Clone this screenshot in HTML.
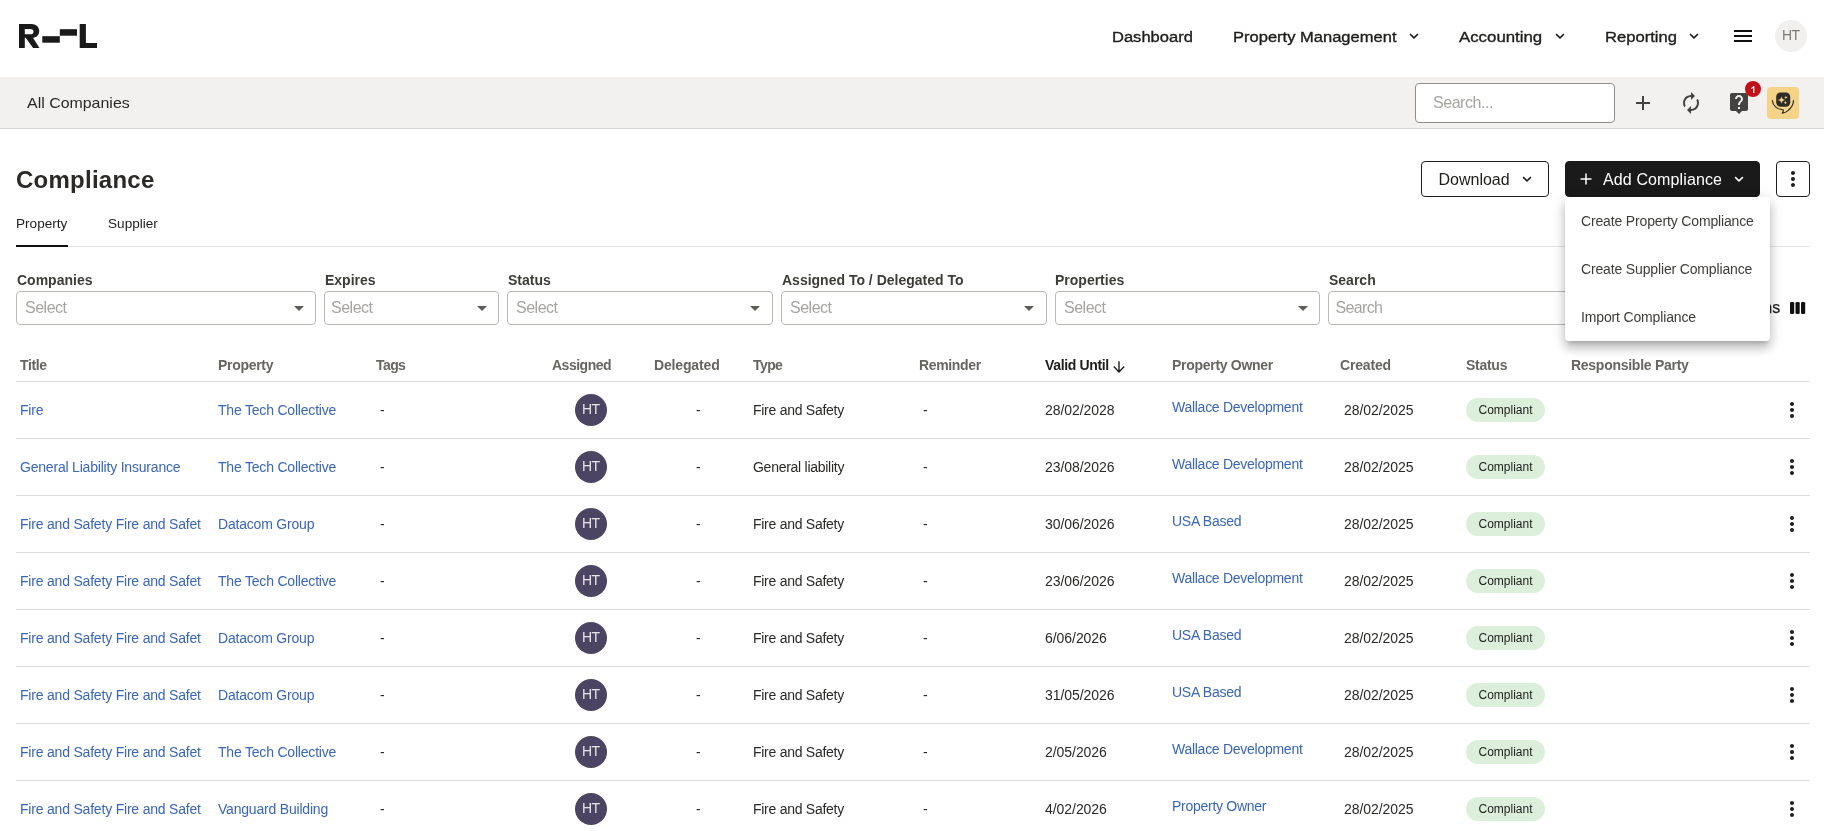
<!DOCTYPE html>
<html>
<head>
<meta charset="utf-8">
<title>Compliance</title>
<style>
*{box-sizing:border-box;margin:0;padding:0}
html,body{width:1824px;height:831px;overflow:hidden;background:#fff}
body{font-family:"Liberation Sans",sans-serif;color:#2a2927;position:relative;font-size:13.6px;-webkit-font-smoothing:antialiased}
.abs{position:absolute;white-space:nowrap}
a{color:#3a66b7;text-decoration:none}
#app{position:absolute;left:0;top:0;width:1824px;height:831px;will-change:transform}
/* header */
.nav{position:absolute;top:0;height:73px;line-height:73px;font-size:15.2px;transform:scaleX(1.088);transform-origin:0 50%;color:#1d1d1b;white-space:nowrap;-webkit-text-stroke:.35px #1d1d1b}
.chev{position:absolute}
#sub{position:absolute;left:0;top:77px;width:1824px;height:52px;background:#f2f1ef;border-bottom:1px solid #d6d5d2}
#gsearch{position:absolute;left:1415px;top:83px;width:200px;height:40px;border:1px solid #8f8e8a;border-radius:4px;background:#fff;font-size:16px;letter-spacing:-.45px;color:#a5a4a1;line-height:38px;padding-left:17px}
/* title */
h1{position:absolute;left:16px;top:165px;font-size:24px;line-height:30px;font-weight:700;color:#2a2927;letter-spacing:.25px}
.btn{position:absolute;top:161px;height:36px;border:1px solid #1d1d1b;border-radius:4px;font-size:16px;line-height:36px;white-space:nowrap}
.tab{position:absolute;top:216px;font-size:13.6px;line-height:16px;color:#1d1d1b}
.flabel{position:absolute;top:272px;font-size:14px;font-weight:700;line-height:16px;color:#3d3c39;white-space:nowrap}
.sel{position:absolute;top:291px;height:34px;border:1px solid #b9b8b2;border-radius:4px;background:#fff;font-size:16px;letter-spacing:-.5px;color:#a5a4a1;line-height:32px;padding-left:8px}
.sel i{position:absolute;right:11px;top:14px;width:0;height:0;border-left:5px solid transparent;border-right:5px solid transparent;border-top:5px solid #5e5c58}
/* table */
.th{position:absolute;top:357px;font-size:14px;font-weight:700;line-height:16px;color:#666561;white-space:nowrap}
.hl{position:absolute;left:16px;width:1794px;height:1px;background:#dcdcda}
.row{position:absolute;left:0;width:1824px;height:57px}
.row span,.row a{position:absolute;top:21px;line-height:16px;white-space:nowrap;font-size:14px;letter-spacing:-.2px}
.row .t{left:20px;max-width:181px;overflow:hidden}
.row .p{left:218px}
.row .d1{left:380px}
.row .av{left:575px;top:13px;width:32px;height:32px;border-radius:50%;background:#4b4462;color:#e6e3e6;font-size:14px;line-height:30px;text-align:center;letter-spacing:-.7px;text-indent:-.7px}
.row .d2{left:696px}
.row .ty{left:753px;letter-spacing:-.27px}
.row .d3{left:923px}
.row .vu{left:1045px;letter-spacing:-.05px}
.row .po{left:1172px;top:18px;letter-spacing:-.27px}
.row .cr{left:1344px;letter-spacing:-.05px}
.row .st{left:1466px;top:17px;width:79px;height:24px;border-radius:12px;background:#dcefdb;color:#1d1d1b;font-size:12px;line-height:24px;text-align:center;letter-spacing:0}
.row svg{position:absolute;left:1780px;top:17px}
/* menu */
#menu{position:absolute;left:1565px;top:197px;width:205px;height:144px;background:#fff;border-radius:4px;box-shadow:0 5px 5px -3px rgba(0,0,0,.2),0 8px 10px 1px rgba(0,0,0,.14),0 3px 14px 2px rgba(0,0,0,.12)}
#menu div{height:48px;line-height:48px;padding-left:16px;letter-spacing:-.15px;font-size:14px;color:#3d3c39;white-space:nowrap}
</style>
</head>
<body>
<div id="app">

<!-- logo -->
<svg class="abs" style="left:0;top:0" width="120" height="76" viewBox="0 0 120 76">
  <g fill="#1a1a1a">
    <path d="M19 24H31.300C36.200 24 39.200 26.900 39.200 31C39.200 34.500 37.100 36.900 34 37.600L33.100 38.050L39.500 47.900H33.100L25.700 37.850H24.800V47.900H19ZM24.800 29.050V34.250H30.400C32.400 34.250 33.500 33.200 33.500 31.650C33.500 30.100 32.400 29.050 30.400 29.050Z" fill-rule="evenodd"/>
    <rect x="42.300" y="36.200" width="17.500" height="6.500"/>
    <rect x="59.800" y="29.200" width="17.200" height="6.500"/>
    <path d="M79.700 24h6.200v19.100H97V48H79.700z"/>
  </g>
</svg>

<!-- nav -->
<div class="nav" style="left:1112px">Dashboard</div>
<div class="nav" style="left:1233px">Property Management</div>
<div class="nav" style="left:1459px;transform:scaleX(1.107)">Accounting</div>
<div class="nav" style="left:1604.800px;transform:scaleX(1.093)">Reporting</div>
<svg class="chev" style="left:1407px;top:29px" width="14" height="14" viewBox="0 0 14 14"><path d="M3.100 5.100L7 8.900l3.900-3.800" fill="none" stroke="#1d1d1b" stroke-width="1.500"/></svg>
<svg class="chev" style="left:1552.500px;top:29px" width="14" height="14" viewBox="0 0 14 14"><path d="M3.100 5.100L7 8.900l3.900-3.800" fill="none" stroke="#1d1d1b" stroke-width="1.500"/></svg>
<svg class="chev" style="left:1687px;top:29px" width="14" height="14" viewBox="0 0 14 14"><path d="M3.100 5.100L7 8.900l3.900-3.800" fill="none" stroke="#1d1d1b" stroke-width="1.500"/></svg>
<svg class="abs" style="left:1731px;top:24px" width="24" height="24" viewBox="0 0 24 24"><path d="M3 18h18v-2H3v2zm0-5h18v-2H3v2zm0-7v2h18V6H3z" fill="#111"/></svg>
<div class="abs" style="left:1775px;top:20px;width:32px;height:32px;border-radius:50%;background:#f1f0ee;color:#7d7b76;font-size:14px;line-height:30px;letter-spacing:-.7px;text-indent:-.7px;text-align:center">HT</div>

<!-- sub header -->
<div id="sub"></div>
<div class="abs" style="left:27px;top:93px;font-size:15px;transform:scaleX(1.062);transform-origin:0 50%;line-height:20px;color:#2a2927">All Companies</div>
<div id="gsearch">Search...</div>
<svg class="abs" style="left:1631px;top:91px" width="24" height="24" viewBox="0 0 24 24"><path d="M19 13h-6v6h-2v-6H5v-2h6V5h2v6h6v2z" fill="#45433f"/></svg>
<svg class="abs" style="left:1679px;top:91px" width="24" height="24" viewBox="0 0 24 24"><path d="M12 6v3l4-4-4-4v3c-4.420 0-8 3.580-8 8 0 1.570.460 3.030 1.240 4.260L6.700 14.800c-.450-.830-.700-1.790-.700-2.800 0-3.310 2.690-6 6-6zm6.760 1.740L17.300 9.200c.440.840.700 1.790.700 2.800 0 3.310-2.690 6-6 6v-3l-4 4 4 4v-3c4.420 0 8-3.580 8-8 0-1.570-.460-3.030-1.240-4.260z" fill="#45433f"/></svg>
<svg class="abs" style="left:1727px;top:91px" width="24" height="24" viewBox="0 0 24 24"><path d="M19 2H5c-1.110 0-2 .9-2 2v14c0 1.100.890 2 2 2h4l3 3 3-3h4c1.100 0 2-.9 2-2V4c0-1.100-.9-2-2-2zm-6 16h-2v-2h2v2zm2.070-7.750l-.9.920C13.450 11.900 13 12.500 13 14h-2v-.5c0-1.100.450-2.100 1.170-2.830l1.240-1.260c.370-.360.590-.860.590-1.410 0-1.100-.9-2-2-2s-2 .9-2 2H8c0-2.210 1.790-4 4-4s4 1.790 4 4c0 .880-.360 1.680-.930 2.250z" fill="#45433f"/></svg>
<div class="abs" style="left:1745px;top:81px;width:16px;height:16px;border-radius:50%;background:#c30f1a;"><svg width="16" height="16" viewBox="0 0 16 16" style="display:block"><path d="M9.400 5.100V11.900H8.100V7C7.500 7.450 6.850 7.750 6 7.900V6.950C7 6.650 7.850 6 8.450 5.100Z" fill="#fff"/></svg></div>
<div class="abs" style="left:1767px;top:87px;width:32px;height:32px;border-radius:4px;background:#f5d488"></div>
<svg class="abs" style="left:1767px;top:87px" width="32" height="32" viewBox="0 0 32 32">
  <rect x="9.200" y="5.500" width="14" height="14.300" rx="4.200" fill="#2e2b26"/>
  <path d="M14.500 9.400l1 2.600 2.600 1-2.600 1-1 2.600-1-2.600-2.600-1 2.600-1zM18.900 8.600l.5 1.300 1.300.5-1.300.5-.5 1.300-.5-1.300-1.300-.5 1.300-.5zM18.400 13.900l.5 1.300 1.300.5-1.300.5-.5 1.300-.5-1.300-1.300-.5 1.300-.5z" fill="#f5d488"/>
  <path d="M5.400 13.500c.3 5 4.600 9 9.800 9.200 1 0 1.500.6 1 1.500l-.9 2c2-.3 4-1.200 5.700-2.600 3.400-2.600 5.400-6 5.500-10" fill="none" stroke="#2e2b26" stroke-width="1.200" stroke-linecap="round" stroke-linejoin="round"/>
</svg>

<!-- title row -->
<h1>Compliance</h1>
<div class="btn" style="left:1421px;width:128px;padding-left:16.500px;color:#1d1d1b;background:#fff">Download</div>
<svg class="chev" style="left:1520px;top:172px" width="14" height="14" viewBox="0 0 14 14"><path d="M3.100 5.100L7 8.900l3.900-3.800" fill="none" stroke="#1d1d1b" stroke-width="1.500"/></svg>
<div class="btn" style="left:1565px;width:195px;padding-left:37px;letter-spacing:.12px;color:#fff;background:#1a1a1a;border-color:#1a1a1a">Add Compliance</div>
<svg class="abs" style="left:1579px;top:172px" width="14" height="14" viewBox="0 0 14 14"><path d="M7 1.500v11M1.500 7h11" fill="none" stroke="#fff" stroke-width="1.500"/></svg>
<svg class="chev" style="left:1732px;top:172px" width="14" height="14" viewBox="0 0 14 14"><path d="M3.100 5.100L7 8.900l3.900-3.800" fill="none" stroke="#fff" stroke-width="1.500"/></svg>
<div class="btn" style="left:1776px;width:34px;background:#fff"></div>
<svg class="abs" style="left:1781px;top:167px" width="24" height="24" viewBox="0 0 24 24"><path d="M12 8c1.100 0 2-.9 2-2s-.9-2-2-2-2 .9-2 2 .9 2 2 2zm0 2c-1.100 0-2 .9-2 2s.9 2 2 2 2-.9 2-2-.9-2-2-2zm0 6c-1.100 0-2 .9-2 2s.9 2 2 2 2-.9 2-2-.9-2-2-2z" fill="#1d1d1b"/></svg>

<!-- tabs -->
<div class="tab" style="left:16px">Property</div>
<div class="tab" style="left:108px">Supplier</div>
<div class="abs" style="left:16px;top:246px;width:1794px;height:1px;background:#e6e6e4"></div>
<div class="abs" style="left:16px;top:245px;width:52px;height:2px;background:#111"></div>

<!-- filters -->
<div class="flabel" style="left:17px">Companies</div>
<div class="flabel" style="left:325px">Expires</div>
<div class="flabel" style="left:508px">Status</div>
<div class="flabel" style="left:782px">Assigned To / Delegated To</div>
<div class="flabel" style="left:1055px">Properties</div>
<div class="flabel" style="left:1329px">Search</div>
<div class="sel" style="left:16px;width:300px">Select<i></i></div>
<div class="sel" style="left:324px;width:175px;padding-left:6px">Select<i></i></div>
<div class="sel" style="left:507px;width:266px">Select<i style="right:12px"></i></div>
<div class="sel" style="left:781px;width:266px">Select<i style="right:12px"></i></div>
<div class="sel" style="left:1055px;width:265px">Select<i></i></div>
<div class="sel" style="left:1328px;width:372px;padding-left:6.500px;letter-spacing:-.65px">Search</div>
<div class="abs" style="left:1717px;top:298px;font-size:16px;line-height:20px;color:#1d1d1b;-webkit-text-stroke:.25px #1d1d1b">Columns</div>
<svg class="abs" style="left:1790px;top:302px" width="16" height="12" viewBox="0 0 16 12"><rect x="0" y="0" width="4.200" height="12" rx="1.200" fill="#111"/><rect x="5.500" y="0" width="4.200" height="12" rx="1.200" fill="#111"/><rect x="11" y="0" width="4.200" height="12" rx="1.200" fill="#111"/></svg>

<!-- table header -->
<div class="th" style="left:20px;letter-spacing:-0.37px">Title</div>
<div class="th" style="left:218px;letter-spacing:-0.30px">Property</div>
<div class="th" style="left:376px;letter-spacing:-0.58px">Tags</div>
<div class="th" style="left:552px;letter-spacing:-0.49px">Assigned</div>
<div class="th" style="left:654px;letter-spacing:-0.15px">Delegated</div>
<div class="th" style="left:753px;letter-spacing:-0.58px">Type</div>
<div class="th" style="left:919px;letter-spacing:-0.35px">Reminder</div>
<div class="th" style="left:1045px;color:#1d1d1b;letter-spacing:-0.35px">Valid Until</div>
<svg class="abs" style="left:1112px;top:359px" width="14" height="15" viewBox="0 0 14 15"><path d="M7 2.200V13M1.800 7.600L7 12.900L12.200 7.600" fill="none" stroke="#1d1d1b" stroke-width="1.400"/></svg>
<div class="th" style="left:1172px;letter-spacing:-0.29px">Property Owner</div>
<div class="th" style="left:1340px;letter-spacing:-0.18px">Created</div>
<div class="th" style="left:1466px;letter-spacing:-0.27px">Status</div>
<div class="th" style="left:1571px;letter-spacing:-0.27px">Responsible Party</div>
<div class="hl" style="top:381px"></div>

<!-- rows -->
<div class="row" style="top:381px"><a class="t">Fire</a><a class="p">The Tech Collective</a><span class="d1">-</span><span class="av">HT</span><span class="d2">-</span><span class="ty">Fire and Safety</span><span class="d3">-</span><span class="vu">28/02/2028</span><a class="po">Wallace Development</a><span class="cr">28/02/2025</span><span class="st">Compliant</span><svg width="24" height="24" viewBox="0 0 24 24"><path d="M12 8c1.100 0 2-.9 2-2s-.9-2-2-2-2 .9-2 2 .9 2 2 2zm0 2c-1.100 0-2 .9-2 2s.9 2 2 2 2-.9 2-2-.9-2-2-2zm0 6c-1.100 0-2 .9-2 2s.9 2 2 2 2-.9 2-2-.9-2-2-2z" fill="#1d1d1b"/></svg></div>
<div class="hl" style="top:438px"></div>
<div class="row" style="top:438px"><a class="t">General Liability Insurance</a><a class="p">The Tech Collective</a><span class="d1">-</span><span class="av">HT</span><span class="d2">-</span><span class="ty">General liability</span><span class="d3">-</span><span class="vu">23/08/2026</span><a class="po">Wallace Development</a><span class="cr">28/02/2025</span><span class="st">Compliant</span><svg width="24" height="24" viewBox="0 0 24 24"><path d="M12 8c1.100 0 2-.9 2-2s-.9-2-2-2-2 .9-2 2 .9 2 2 2zm0 2c-1.100 0-2 .9-2 2s.9 2 2 2 2-.9 2-2-.9-2-2-2zm0 6c-1.100 0-2 .9-2 2s.9 2 2 2 2-.9 2-2-.9-2-2-2z" fill="#1d1d1b"/></svg></div>
<div class="hl" style="top:495px"></div>
<div class="row" style="top:495px"><a class="t">Fire and Safety Fire and Safet</a><a class="p">Datacom Group</a><span class="d1">-</span><span class="av">HT</span><span class="d2">-</span><span class="ty">Fire and Safety</span><span class="d3">-</span><span class="vu">30/06/2026</span><a class="po">USA Based</a><span class="cr">28/02/2025</span><span class="st">Compliant</span><svg width="24" height="24" viewBox="0 0 24 24"><path d="M12 8c1.100 0 2-.9 2-2s-.9-2-2-2-2 .9-2 2 .9 2 2 2zm0 2c-1.100 0-2 .9-2 2s.9 2 2 2 2-.9 2-2-.9-2-2-2zm0 6c-1.100 0-2 .9-2 2s.9 2 2 2 2-.9 2-2-.9-2-2-2z" fill="#1d1d1b"/></svg></div>
<div class="hl" style="top:552px"></div>
<div class="row" style="top:552px"><a class="t">Fire and Safety Fire and Safet</a><a class="p">The Tech Collective</a><span class="d1">-</span><span class="av">HT</span><span class="d2">-</span><span class="ty">Fire and Safety</span><span class="d3">-</span><span class="vu">23/06/2026</span><a class="po">Wallace Development</a><span class="cr">28/02/2025</span><span class="st">Compliant</span><svg width="24" height="24" viewBox="0 0 24 24"><path d="M12 8c1.100 0 2-.9 2-2s-.9-2-2-2-2 .9-2 2 .9 2 2 2zm0 2c-1.100 0-2 .9-2 2s.9 2 2 2 2-.9 2-2-.9-2-2-2zm0 6c-1.100 0-2 .9-2 2s.9 2 2 2 2-.9 2-2-.9-2-2-2z" fill="#1d1d1b"/></svg></div>
<div class="hl" style="top:609px"></div>
<div class="row" style="top:609px"><a class="t">Fire and Safety Fire and Safet</a><a class="p">Datacom Group</a><span class="d1">-</span><span class="av">HT</span><span class="d2">-</span><span class="ty">Fire and Safety</span><span class="d3">-</span><span class="vu">6/06/2026</span><a class="po">USA Based</a><span class="cr">28/02/2025</span><span class="st">Compliant</span><svg width="24" height="24" viewBox="0 0 24 24"><path d="M12 8c1.100 0 2-.9 2-2s-.9-2-2-2-2 .9-2 2 .9 2 2 2zm0 2c-1.100 0-2 .9-2 2s.9 2 2 2 2-.9 2-2-.9-2-2-2zm0 6c-1.100 0-2 .9-2 2s.9 2 2 2 2-.9 2-2-.9-2-2-2z" fill="#1d1d1b"/></svg></div>
<div class="hl" style="top:666px"></div>
<div class="row" style="top:666px"><a class="t">Fire and Safety Fire and Safet</a><a class="p">Datacom Group</a><span class="d1">-</span><span class="av">HT</span><span class="d2">-</span><span class="ty">Fire and Safety</span><span class="d3">-</span><span class="vu">31/05/2026</span><a class="po">USA Based</a><span class="cr">28/02/2025</span><span class="st">Compliant</span><svg width="24" height="24" viewBox="0 0 24 24"><path d="M12 8c1.100 0 2-.9 2-2s-.9-2-2-2-2 .9-2 2 .9 2 2 2zm0 2c-1.100 0-2 .9-2 2s.9 2 2 2 2-.9 2-2-.9-2-2-2zm0 6c-1.100 0-2 .9-2 2s.9 2 2 2 2-.9 2-2-.9-2-2-2z" fill="#1d1d1b"/></svg></div>
<div class="hl" style="top:723px"></div>
<div class="row" style="top:723px"><a class="t">Fire and Safety Fire and Safet</a><a class="p">The Tech Collective</a><span class="d1">-</span><span class="av">HT</span><span class="d2">-</span><span class="ty">Fire and Safety</span><span class="d3">-</span><span class="vu">2/05/2026</span><a class="po">Wallace Development</a><span class="cr">28/02/2025</span><span class="st">Compliant</span><svg width="24" height="24" viewBox="0 0 24 24"><path d="M12 8c1.100 0 2-.9 2-2s-.9-2-2-2-2 .9-2 2 .9 2 2 2zm0 2c-1.100 0-2 .9-2 2s.9 2 2 2 2-.9 2-2-.9-2-2-2zm0 6c-1.100 0-2 .9-2 2s.9 2 2 2 2-.9 2-2-.9-2-2-2z" fill="#1d1d1b"/></svg></div>
<div class="hl" style="top:780px"></div>
<div class="row" style="top:780px"><a class="t">Fire and Safety Fire and Safet</a><a class="p">Vanguard Building</a><span class="d1">-</span><span class="av">HT</span><span class="d2">-</span><span class="ty">Fire and Safety</span><span class="d3">-</span><span class="vu">4/02/2026</span><a class="po">Property Owner</a><span class="cr">28/02/2025</span><span class="st">Compliant</span><svg width="24" height="24" viewBox="0 0 24 24"><path d="M12 8c1.100 0 2-.9 2-2s-.9-2-2-2-2 .9-2 2 .9 2 2 2zm0 2c-1.100 0-2 .9-2 2s.9 2 2 2 2-.9 2-2-.9-2-2-2zm0 6c-1.100 0-2 .9-2 2s.9 2 2 2 2-.9 2-2-.9-2-2-2z" fill="#1d1d1b"/></svg></div>
<div class="hl" style="top:837px"></div>

<!-- dropdown menu -->
<div id="menu"><div>Create Property Compliance</div><div>Create Supplier Compliance</div><div>Import Compliance</div></div>

</div>
</body>
</html>
